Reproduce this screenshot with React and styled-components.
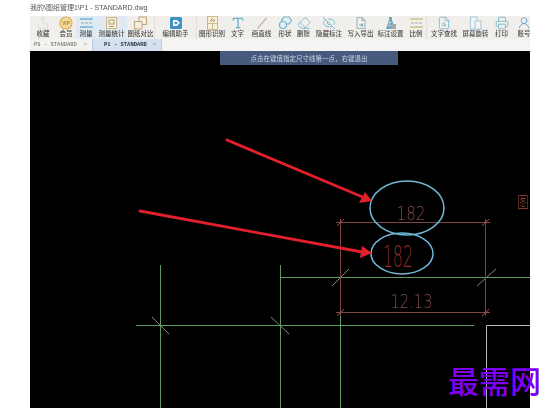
import React from 'react';
import styled, { createGlobalStyle } from 'styled-components';
import { Printer, UserRound, EyeOff, Type, FileSearch, Eraser, Share } from 'lucide-react';

const GlobalStyle = createGlobalStyle`
  html, body {
    margin: 0;
    padding: 0;
    background: #fff;
  }
`;

const Page = styled.div`
  position: relative;
  width: 560px;
  height: 414px;
  overflow: hidden;
  background: #fff;
`;

const Frame = styled.div`
  display: flex;
  flex-direction: column;
  width: 500px;
  height: 408px;
  margin-left: 30px;
  overflow: hidden;
`;

const TitleBar = styled.div`
  height: 16px;
  flex-shrink: 0;
  padding-top: 3px;
  box-sizing: border-box;
  font: 7px/10px "Liberation Sans", "Noto Sans CJK SC", sans-serif;
  color: #555;
  filter: blur(0.3px);
`;

const Toolbar = styled.div`
  display: flex;
  height: 23px;
  flex-shrink: 0;
  background: #f1efeb;
`;

const Tool = styled.div`
  display: flex;
  flex-direction: column;
  align-items: center;
  flex: 0 0 ${p => p.$w}px;
  width: ${p => p.$w}px;
  height: 23px;
  box-sizing: border-box;
  background: ${p => (p.$active ? '#dfeaf2' : 'transparent')};
  border-right: ${p => (p.$divider ? '1px solid #e2dfd9' : 'none')};
  svg {
    display: block;
    filter: blur(0.5px);
    opacity: 0.85;
  }
`;

const ToolLabel = styled.span`
  font: 500 6.5px/7px "Noto Sans CJK SC", sans-serif;
  color: #4a4a4a;
  white-space: nowrap;
  filter: blur(0.4px);
`;

const TabBar = styled.div`
  display: flex;
  height: 12px;
  flex-shrink: 0;
  background: #f5f4f2;
`;

const Tab = styled.div`
  display: flex;
  align-items: center;
  justify-content: space-between;
  width: ${p => p.$w}px;
  box-sizing: border-box;
  padding: 0 5px 0 ${p => (p.$active ? 11 : 4)}px;
  background: ${p => (p.$active ? '#d3e2ee' : '#f3f2ef')};
  border-left: ${p => (p.$active ? '1px solid #b9cbdb' : 'none')};
  border-right: ${p => (p.$active ? '1px solid #b9cbdb' : 'none')};
  font: ${p => (p.$active ? 700 : 400)} 5.5px/12px "Liberation Mono", monospace;
  color: ${p => (p.$active ? '#2c3440' : '#666')};
  filter: blur(0.25px);
  i {
    font-style: normal;
    color: #9aa;
  }
`;

const Canvas = styled.div`
  position: relative;
  flex: 1;
  background: #000;
`;

const Banner = styled.div`
  position: absolute;
  top: 0;
  left: 190px;
  width: 178px;
  height: 14px;
  background: #465a7e;
  color: #c9d3e2;
  font: 6.5px/14px "Noto Sans CJK SC", sans-serif;
  text-align: center;
  filter: blur(0.25px);
`;

const Drawing = styled.svg`
  display: block;
  width: 500px;
  height: 357px;
  filter: blur(0.3px);
`;

const Watermark = styled.div`
  position: absolute;
  left: 448px;
  top: 360px;
  font: 500 31px/40px "Noto Sans CJK SC", sans-serif;
  color: #7f00f0;
  white-space: nowrap;
`;

const teal = '#5aa8c8';
const tan = '#c9b078';

const Measure = ({ color = teal }) => (
  <svg width="15" height="14" viewBox="0 0 15 14" fill="none" stroke={color}>
    <path d="M1 3h13" strokeWidth="1.4" />
    <path d="M2 7h3M6 7h3M10 7h3" stroke="#8fa3a8" />
    <path d="M1 11h13" strokeWidth="1.4" />
  </svg>
);

const DocTan = () => (
  <svg width="15" height="14" viewBox="0 0 15 14" fill="#f7f2e2" stroke={tan}>
    <rect x="2.5" y="1.5" width="10" height="11" />
    <rect x="5" y="4" width="5" height="4" fill="none" stroke="#a88f58" />
    <path d="M5 10.5h5" stroke="#a88f58" />
  </svg>
);

const Compare = () => (
  <svg width="15" height="14" viewBox="0 0 15 14" fill="none" stroke="#c59a62" strokeWidth="1.1">
    <rect x="6" y="1" width="7.5" height="7.5" />
    <rect x="1.5" y="5.5" width="7.5" height="7.5" fill="#f1efeb" />
  </svg>
);

const Vip = () => (
  <svg width="14" height="14" viewBox="0 0 14 14">
    <circle cx="7" cy="7" r="6" fill="#f6d98f" stroke="#d9a441" strokeWidth="1.2" />
    <text x="7" y="8.8" textAnchor="middle" fontSize="4.6" fontWeight="700" fontFamily="Liberation Sans" fill="#a86d10">VIP</text>
  </svg>
);

const Helper = () => (
  <svg width="14" height="14" viewBox="0 0 14 14">
    <rect x="1" y="1" width="12" height="12" rx="1.5" fill="#1d83bd" />
    <path d="M4 4h4l3 3-3 3H4z" fill="#fff" />
    <path d="M5.6 5.8h2l1 1.2-1 1.2h-2z" fill="#1d83bd" />
  </svg>
);

const Recognize = () => (
  <svg width="15" height="14" viewBox="0 0 15 14" fill="#f8f2dd" stroke={tan}>
    <rect x="2.5" y="0.5" width="10" height="13" />
    <path d="M2.5 7.5h10M7.5 7.5v6" />
    <path d="M5 5l2.5-2.5L10 5z" fill="none" stroke="#b58f4a" />
  </svg>
);

const Line = () => (
  <svg width="14" height="14" viewBox="0 0 14 14" fill="none">
    <path d="M2.5 12.5L11.5 2" stroke="#b7ad8f" strokeWidth="1.2" />
  </svg>
);

const Shape = () => (
  <svg width="15" height="14" viewBox="0 0 15 14" fill="#e2f0f6" stroke={teal} strokeWidth="1.2">
    <path d="M6 1h5l2.5 3.5L11 8H6L3.5 4.5z" />
    <circle cx="5" cy="9" r="3.5" />
  </svg>
);

const Arrowed = () => (
  <svg width="15" height="14" viewBox="0 0 15 14" fill="none" stroke="#8fb0ba" strokeWidth="1.1">
    <path d="M4 1.5h5l3 3v8H4z" />
    <path d="M9 1.5v3h3" />
    <path d="M6 9h4M8.5 7.5L10 9l-1.5 1.5" stroke={teal} />
  </svg>
);

const Settings = () => (
  <svg width="15" height="14" viewBox="0 0 15 14">
    <path d="M6 1h3v3l3 9H3l3-9z" fill="#5d9cb8" />
    <rect x="8.5" y="8" width="4.5" height="5" fill="#9a9d9c" />
    <path d="M6 6h2v1H6zM5.5 9h2v1h-2z" fill="#e8f2f6" />
  </svg>
);

const Rotate = () => (
  <svg width="15" height="14" viewBox="0 0 15 14" fill="#f5f7f8" stroke="#9cc3d6" strokeWidth="1.1">
    <rect x="2.5" y="1" width="6.5" height="12" />
    <rect x="7" y="5" width="6" height="8" />
  </svg>
);

const lucide = { size: 14, strokeWidth: 1.4, color: teal };

const tools = [
  { w: 26, label: '收藏', icon: <Share size={14} strokeWidth={1.2} color="#cfcdc8" /> },
  { w: 20, label: '会员', icon: <Vip /> },
  { w: 20, label: '测量', icon: <Measure />, active: true },
  { w: 31, label: '测量统计', icon: <DocTan />, active: true },
  { w: 28, label: '图纸对比', icon: <Compare />, divider: true },
  { w: 42, label: '编辑助手', icon: <Helper />, divider: true },
  { w: 30, label: '图形识别', icon: <Recognize /> },
  { w: 21, label: '文字', icon: <Type {...lucide} strokeWidth={2.4} /> },
  { w: 27, label: '画直线', icon: <Line /> },
  { w: 20, label: '形状', icon: <Shape /> },
  { w: 17, label: '删除', icon: <Eraser {...lucide} /> },
  { w: 34, label: '隐藏标注', icon: <EyeOff {...lucide} /> },
  { w: 29, label: '写入导出', icon: <Arrowed /> },
  { w: 31, label: '标注设置', icon: <Settings /> },
  { w: 21, label: '比例', icon: <Measure color={tan} />, divider: true },
  { w: 34, label: '文字查找', icon: <FileSearch {...lucide} /> },
  { w: 29, label: '屏幕旋转', icon: <Rotate /> },
  { w: 23, label: '打印', icon: <Printer {...lucide} /> },
  { w: 22, label: '账号', icon: <UserRound {...lucide} color="#4a93c4" /> },
];

const green = '#5f9a62';
const dim = '#7d4543';
const pale = '#7e8a7c';
const red = '#e2202c';

// page coordinates, the viewBox starts where the canvas starts
const CadDrawing = () => (
  <Drawing viewBox="30 51 500 357" fill="none">
    <g stroke={green} strokeWidth="1">
      <path d="M160.5 265V408M280.5 265V408M340.5 277V408" />
      <path d="M280 277.5H530M136 325.5H474" />
    </g>
    <path d="M486.5 408V325.5H530" stroke="#b8b8b8" strokeWidth="1" />
    <g stroke={pale} strokeWidth="1">
      <path d="M332 286L349 269M477 286L496 269M152 317L169 334M271 317L289 334" />
    </g>
    <g stroke={dim} strokeWidth="1">
      <path d="M340.5 219V316M485.5 219V316M336 222.5H490M336 312.5H490" />
      <path d="M337 226L344 219M482 226L489 219M337 316L344 309M482 316L489 309" stroke="#a84c46" />
    </g>
    <ellipse cx="407" cy="208" rx="37" ry="27" stroke="#6fb8d8" strokeWidth="1.5" />
    <ellipse cx="402" cy="253.5" rx="31" ry="20.5" stroke="#6fb8d8" strokeWidth="1.5" />
    <g fontFamily="DejaVu Sans" fontWeight="200" textAnchor="middle">
      <text x="411" y="220" fontSize="20" fill="#7f4a47" textLength="29" lengthAdjust="spacingAndGlyphs">182</text>
      <text transform="translate(398 267) scale(1 1.75)" fontSize="17" fill="#8f2c29" textLength="30" lengthAdjust="spacingAndGlyphs">182</text>
      <text x="411.5" y="308" fontSize="20" fill="#7f4a47" textLength="42" lengthAdjust="spacingAndGlyphs">12.13</text>
      <text transform="translate(523 208) scale(1 1.4)" fontSize="11" fill="#a84a40" fontFamily="Noto Sans CJK SC" fontWeight="300">图</text>
    </g>
    <g stroke={red} strokeWidth="2.8" strokeLinecap="round">
      <path d="M227 140L365 198" />
      <path d="M140 211L362 252" />
    </g>
    <g fill={red}>
      <polygon points="365,192 359,203 372,201" />
      <polygon points="362,246 360,258 372,253" />
    </g>
  </Drawing>
);

export default function App() {
  return (
    <Page>
      <GlobalStyle />
      <Frame>
        <TitleBar>我的\图纸管理1\P1 - STANDARD.dwg</TitleBar>
        <Toolbar>
          {tools.map(t => (
            <Tool key={t.label} $w={t.w} $active={t.active} $divider={t.divider}>
              {t.icon}
              <ToolLabel>{t.label}</ToolLabel>
            </Tool>
          ))}
        </Toolbar>
        <TabBar>
          <Tab $w={62}>P9 - STANDARD<i>×</i></Tab>
          <Tab $w={70} $active>P1 - STANDARD<i>×</i></Tab>
        </TabBar>
        <Canvas>
          <CadDrawing />
          <Banner>点击在键值指定尺寸线第一点，右键退出</Banner>
        </Canvas>
      </Frame>
      <Watermark>最需网</Watermark>
    </Page>
  );
}
